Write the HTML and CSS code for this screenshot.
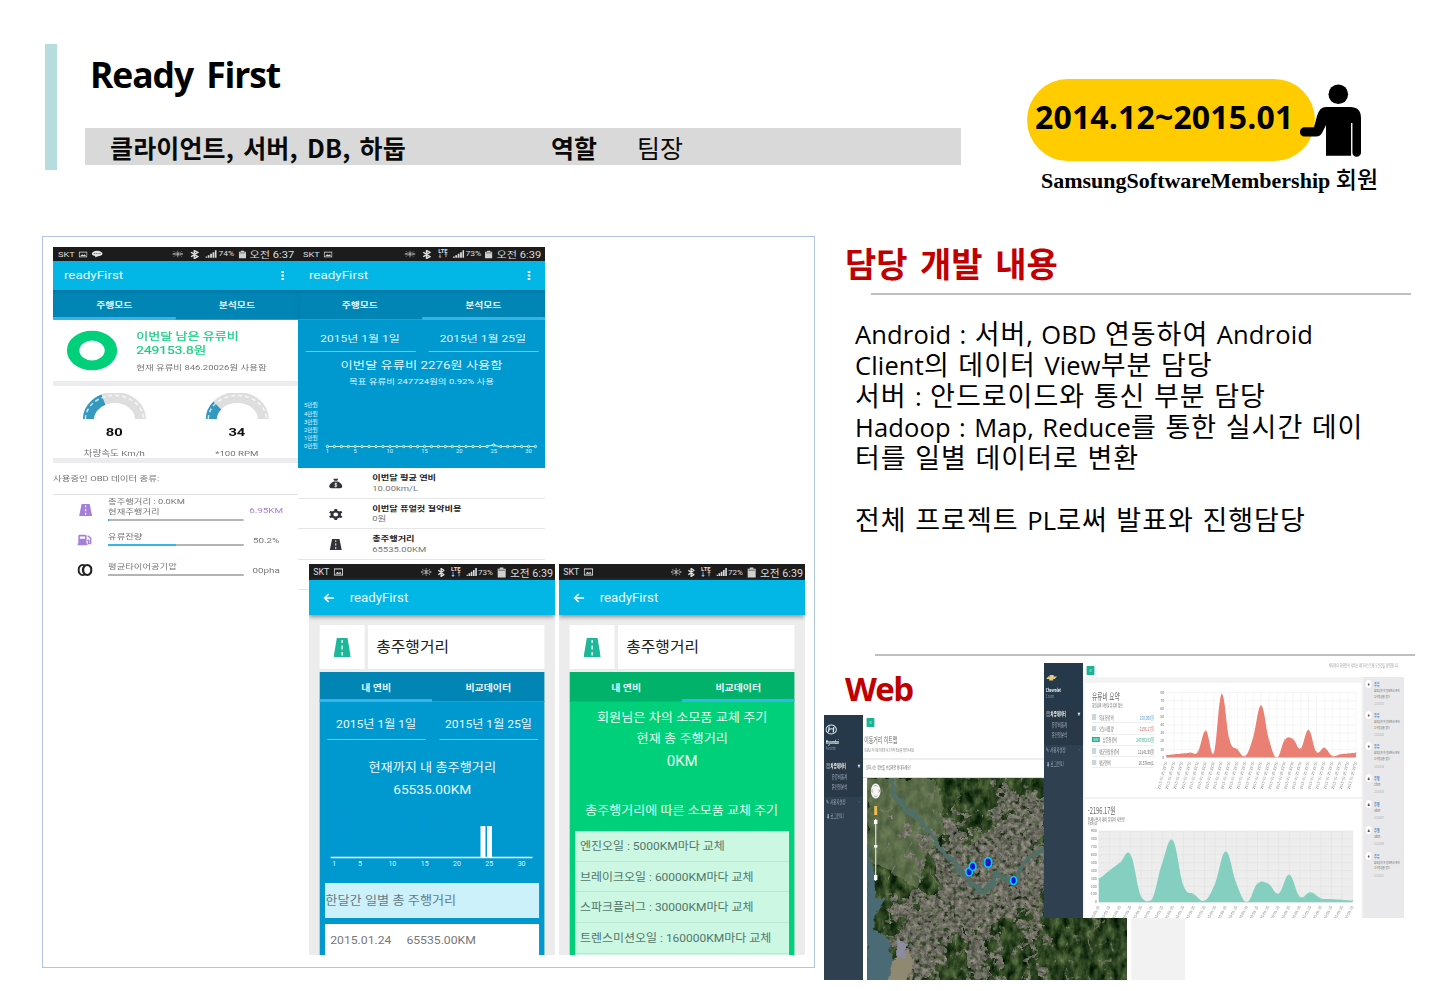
FILE: index.html
```html
<!DOCTYPE html>
<html lang="ko">
<head>
<meta charset="utf-8">
<title>Ready First</title>
<link rel="stylesheet" href="styles.css">
</head>
<body>
<svg class="defs" aria-hidden="true">
  <symbol id="i-pic" viewBox="0 0 10 8"><rect x=".6" y=".6" width="8.8" height="6.8" fill="none" stroke="#ddd" stroke-width="1.1"/><path d="M2 6l2-2.4 1.5 1.5L7 3.800 8.200 6z" fill="#ddd"/></symbol>
  <symbol id="i-chat" viewBox="0 0 12 9"><ellipse cx="6" cy="4" rx="5.600" ry="3.700" fill="#e4e4e4"/><path d="M4 7l0 2 2.500-2z" fill="#e4e4e4"/><path d="M2.500 4h7" stroke="#555" stroke-width="1.300" stroke-dasharray="1.300 .6"/></symbol>
  <symbol id="i-eye" viewBox="0 0 12 9"><path d="M.5 4.500Q6 .8 11.500 4.500Q6 8.200 .5 4.500M2 1l1 1.300M6 0v1.800M10 1L9 2.300M2 8l1-1.300M6 9V7.200M10 8L9 6.700" fill="none" stroke="#aaa" stroke-width=".9"/><circle cx="6" cy="4.500" r="1.500" fill="#aaa"/></symbol>
  <symbol id="i-bt" viewBox="0 0 8 10"><path d="M1 2.500l6 5L4 9.500v-9l3 2-6 5" fill="none" stroke="#ddd" stroke-width="1.500"/></symbol>
  <symbol id="i-sig" viewBox="0 0 11 9"><path d="M0 9V7.500h1.700V9zM2.300 9V6h1.700v3zM4.600 9V4.300h1.700V9zM6.900 9V2.300h1.700V9zM9.200 9V0h1.700v9z" fill="#ddd"/></symbol>
  <symbol id="i-bat" viewBox="0 0 8 10"><path d="M2.300 0h3.400v1.200H8V10H0V1.200h2.300z" fill="#d0d0d0"/><path d="M1 2h6v1.500H1z" fill="#888"/></symbol>
  <symbol id="i-dots" viewBox="0 0 3 9"><path d="M.5 0h2v2h-2zM.5 3.500h2v2h-2zM.5 7h2v2h-2z" fill="#fff"/></symbol>
  <symbol id="i-back" viewBox="0 0 11 10"><path d="M10.500 5H1.500M5.500 1L1.500 5l4 4" fill="none" stroke="#fff" stroke-width="1.400"/></symbol>
  <symbol id="i-road" viewBox="0 0 16 19"><path d="M3 0h10l3 19H0z" fill="currentColor"/><path d="M8 2v3M8 7.500v4M8 14v3.500" stroke="#fff" stroke-opacity=".85" stroke-width="1.400"/></symbol>
  <symbol id="i-pump" viewBox="0 0 15 13"><path d="M1 1.500Q1 0 2.500 0h5Q9 0 9 1.500V11h1v2H0v-2h1z" fill="currentColor"/><path d="M2.500 2h5v3h-5z" fill="#fff"/><path d="M10 1l3 3v6q-.3 2-2 1V7H9.500" fill="none" stroke="currentColor" stroke-width="1.500"/></symbol>
  <symbol id="i-tire" viewBox="0 0 13 13"><ellipse cx="4.600" cy="6.500" rx="3.600" ry="5.600" fill="none" stroke="#222" stroke-width="1.800"/><ellipse cx="8.400" cy="6.500" rx="3.600" ry="5.400" fill="#fff" stroke="#222" stroke-width="2"/></symbol>
  <symbol id="i-money" viewBox="0 0 14 12"><path d="M4.500 0h5L8.500 2.500h-3zM5 3.500h4Q14 7 13.500 10 13 12 11 12H3Q1 12 .5 10 0 7 5 3.500z" fill="#333238"/><path d="M8.400 6Q6 5.300 5.900 6.800 6 7.600 7.200 7.700 8.500 8 8.200 9.200 7.300 10.300 5.600 9.600M7 5v6" fill="none" stroke="#fff" stroke-width=".8"/></symbol>
  <symbol id="i-gear" viewBox="0 0 14 14"><circle cx="7" cy="7" r="3.800" fill="none" stroke="#333238" stroke-width="2.800"/><path d="M7 0v2.800M7 11.200V14M1 3.500l2.400 1.400M10.600 9.100L13 10.500M1 10.500l2.400-1.400M10.600 4.900L13 3.500" stroke="#333238" stroke-width="2.800"/></symbol>
</svg>

<main class="slide">
  <header class="head">
    <i class="accent"></i>
    <div class="intro">
      <h1>Ready First</h1>
      <div class="meta"><b class="stack">클라이언트, 서버, DB, 하둡</b><b class="role">역할</b><span>팀장</span></div>
    </div>
    <div class="period">
      <div class="when"><div class="pill">2014.12~2015.01</div>
        <svg class="person" viewBox="300 24 62 74"><circle cx="338.300" cy="34.200" r="9.800"/><path d="M326 47H350Q361 47 361 58V92.500a4.300 4.300 0 0 1-8.700 0V63h-1V95.700H326V65L322.500 72Q320.500 76.500 316 76.500H304.500a4.600 4.600 0 0 1 0-9.200H314L317 56Q319.500 47 326 47Z"/><path d="M351.700 63V95.700" stroke="#fff" stroke-width="1"/></svg>
      </div>
      <p class="member">SamsungSoftwareMembership <span>회원</span></p>
    </div>
  </header>

  <section class="gallery">
    <article class="phone wide p1"><div class="screen">
      <div class="status"><span>SKT</span><svg class="pic"><use href="#i-pic"/></svg><svg class="chat"><use href="#i-chat"/></svg><i class="sp"></i><svg class="eye"><use href="#i-eye"/></svg><svg class="bt"><use href="#i-bt"/></svg><svg class="sig"><use href="#i-sig"/></svg><small>74%</small><svg class="bat"><use href="#i-bat"/></svg><em>오전 6:37</em></div>
      <div class="appbar"><span>readyFirst</span><svg class="dots"><use href="#i-dots"/></svg></div>
      <div class="tabs"><b class="on">주행모드</b><b>분석모드</b></div>
      <div class="fuel">
        <svg class="ring" viewBox="0 0 40 40" preserveAspectRatio="none"><circle cx="20" cy="20" r="14.400" fill="none" stroke="#00d07a" stroke-width="9.500"/></svg>
        <div><p>이번달 남은 유류비</p><p class="sum">249153.8원</p><small>현재 유류비 846.20026원 사용함</small></div>
      </div>
      <div class="gauges">
        <div><svg viewBox="0 0 64 27" preserveAspectRatio="none"><path d="M6 26A26 21.500 0 0 1 58 26" fill="none" stroke="#dedede" stroke-width="11"/><path d="M6 26A26 21.500 0 0 1 21 6.700" fill="none" stroke="#3498bf" stroke-width="11"/><path d="M3 26A29 23.500 0 0 1 61 26" fill="none" stroke="#fff" stroke-opacity=".75" stroke-width="1.500" stroke-dasharray="4 3"/></svg><b>80</b><span>차량속도 Km/h</span></div>
        <div><svg viewBox="0 0 64 27" preserveAspectRatio="none"><path d="M6 26A26 21.500 0 0 1 58 26" fill="none" stroke="#dedede" stroke-width="11"/><path d="M6 26A26 21.500 0 0 1 12 12.500" fill="none" stroke="#3498bf" stroke-width="11"/><path d="M3 26A29 23.500 0 0 1 61 26" fill="none" stroke="#fff" stroke-opacity=".75" stroke-width="1.500" stroke-dasharray="4 3"/></svg><b>34</b><span>*100 RPM</span></div>
      </div>
      <p class="kinds">사용중인 OBD 데이터 종류:</p>
      <div class="obd two"><svg class="violet road"><use href="#i-road"/></svg><div><span>총주행거리 : 0.0KM</span><span>현재주행거리</span><i class="bar"><i style="width:1%"></i></i></div><em class="violet">6.95KM</em></div>
      <div class="obd"><svg class="violet pump"><use href="#i-pump"/></svg><div><span>유류잔량</span><i class="bar"><i style="width:50.2%"></i></i></div><em>50.2%</em></div>
      <div class="obd"><svg class="tire"><use href="#i-tire"/></svg><div><span>평균타이어공기압</span><i class="bar"></i></div><em>00pha</em></div>
    </div></article>

    <article class="phone wide p2"><div class="screen">
      <div class="status"><span>SKT</span><svg class="pic"><use href="#i-pic"/></svg><i class="sp"></i><svg class="eye"><use href="#i-eye"/></svg><svg class="bt"><use href="#i-bt"/></svg><span class="lte">LTE<br>↓↑</span><svg class="sig"><use href="#i-sig"/></svg><small>73%</small><svg class="bat"><use href="#i-bat"/></svg><em>오전 6:39</em></div>
      <div class="appbar"><span>readyFirst</span><svg class="dots"><use href="#i-dots"/></svg></div>
      <div class="tabs"><b>주행모드</b><b class="on">분석모드</b></div>
      <div class="analysis">
        <div class="dates"><span>2015년 1월 1일</span><span>2015년 1월 25일</span></div>
        <p class="big">이번달 유류비 2276원 사용함</p>
        <p class="goal">목표 유류비 247724원의 0.92% 사용</p>
        <svg id="cost" class="cost" viewBox="0 0 247 68" preserveAspectRatio="none"></svg>
      </div>
      <div class="item"><svg><use href="#i-money"/></svg><div><b>이번달 평균 연비</b><span>10.00km/L</span></div></div>
      <div class="item"><svg><use href="#i-gear"/></svg><div><b>이번달 퓨얼컷 절약비용</b><span>0원</span></div></div>
      <div class="item"><svg class="road"><use href="#i-road"/></svg><div><b>총주행거리</b><span>65535.00KM</span></div></div>
      <div class="item blank"></div>
    </div></article>

    <article class="phone tall p3"><div class="screen">
      <div class="status"><span>SKT</span><svg class="pic"><use href="#i-pic"/></svg><i class="sp"></i><svg class="eye"><use href="#i-eye"/></svg><svg class="bt"><use href="#i-bt"/></svg><span class="lte">LTE<br>↓↑</span><svg class="sig"><use href="#i-sig"/></svg><small>73%</small><svg class="bat"><use href="#i-bat"/></svg><em>오전 6:39</em></div>
      <div class="appbar"><svg class="back"><use href="#i-back"/></svg><span>readyFirst</span></div>
      <div class="sheet">
        <div class="name"><div><svg><use href="#i-road"/></svg></div><h3>총주행거리</h3></div>
        <div class="tabs"><b class="on">내 연비</b><b>비교데이터</b></div>
        <div class="mine">
          <div class="dates"><span>2015년 1월 1일</span><span>2015년 1월 25일</span></div>
          <p class="now">현재까지 내 총주행거리</p>
          <p class="km">65535.00KM</p>
          <svg id="dist" class="dist" viewBox="0 0 225 64" preserveAspectRatio="none"></svg>
          <p class="daily">한달간 일별 총 주행거리</p>
          <p class="day"><span>2015.01.24</span><span>65535.00KM</span></p>
        </div>
      </div>
    </div></article>

    <article class="phone tall p4"><div class="screen">
      <div class="status"><span>SKT</span><svg class="pic"><use href="#i-pic"/></svg><i class="sp"></i><svg class="eye"><use href="#i-eye"/></svg><svg class="bt"><use href="#i-bt"/></svg><span class="lte">LTE<br>↓↑</span><svg class="sig"><use href="#i-sig"/></svg><small>72%</small><svg class="bat"><use href="#i-bat"/></svg><em>오전 6:39</em></div>
      <div class="appbar"><svg class="back"><use href="#i-back"/></svg><span>readyFirst</span></div>
      <div class="sheet">
        <div class="name"><div><svg><use href="#i-road"/></svg></div><h3>총주행거리</h3></div>
        <div class="tabs green"><b>내 연비</b><b class="on">비교데이터</b></div>
        <div class="compare">
          <p>회원님은 차의 소모품 교체 주기</p><p>현재 총 주행거리</p><p class="zero">0KM</p>
          <p class="cycle">총주행거리에 따른 소모품 교체 주기</p>
          <ul><li>엔진오일 : 5000KM마다 교체</li><li>브레이크오일 : 60000KM마다 교체</li><li>스파크플러그 : 30000KM마다 교체</li><li>트렌스미션오일 : 160000KM마다 교체</li><li></li></ul>
        </div>
      </div>
    </div></article>
  </section>

  <section class="work">
    <h2>담당 개발 내용</h2>
    <hr>
    <div class="desc">
      <p><span class="en">Android : </span>서버<span class="en">, OBD </span>연동하여 <span class="en">Android</span></p>
      <p><span class="en">Client</span>의 데이터 <span class="en">View</span>부분 담당</p>
      <p>서버<span class="en"> : </span>안드로이드와 통신 부분 담당</p>
      <p><span class="en">Hadoop : Map, Reduce</span>를 통한 실시간 데이</p>
      <p>터를 일별 데이터로 변환</p>
      <p>&nbsp;</p>
      <p>전체 프로젝트 <span class="en">PL</span>로써 발표와 진행담당</p>
    </div>
    <hr class="second">
    <h2 class="web">Web</h2>
  </section>

  <article class="window w1"><div class="view">
    <nav class="side">
      <svg class="logo" viewBox="0 0 12 11" preserveAspectRatio="none"><ellipse cx="6" cy="5.500" rx="5.200" ry="4.500" fill="none" stroke="#dfe5ea" stroke-width="1"/><path d="M4 2.500L3.300 8M8.700 3L8 8.500M3.800 5.800Q6 4 8.300 5.300" fill="none" stroke="#dfe5ea" stroke-width="1.200"/></svg>
      <b>Hyundai</b><small>Avante</small>
      <div class="menu"><b>▤ 차종데이터 <i>▾</i></b><span>유류비통계</span><span>운전일분석</span></div>
      <p>✎ 사용자설정 <i>‹</i></p><p>⬇ 로그인(L)</p>
    </nav>
    <div class="page">
      <div class="top"><i class="burger">≡</i></div>
      <h4>이동거리 히트맵</h4>
      <p class="sub">회원님 차 이동거리와 사고지역 정보를 확인하세요</p>
      <p class="hint">원하시는 정보를 보실려면 확대하세요!</p>
      <div class="maprow">
      <svg class="map" viewBox="0 0 260 202" preserveAspectRatio="none">
        <defs>
          <filter id="forest" x="0" y="0" width="100%" height="100%" color-interpolation-filters="sRGB"><feTurbulence type="fractalNoise" baseFrequency=".13 .08" numOctaves="4" seed="4"/><feColorMatrix values=".55 0 0 0 -.1  .55 0 0 0 -.01  .4 0 0 0 -.07  0 0 0 0 1"/></filter>
          <filter id="town" x="-10%" y="-10%" width="120%" height="120%" color-interpolation-filters="sRGB"><feTurbulence type="fractalNoise" baseFrequency=".07" numOctaves="4" seed="8" result="n"/><feDisplacementMap in="SourceGraphic" in2="n" scale="60" xChannelSelector="R" yChannelSelector="G" result="s"/><feTurbulence type="fractalNoise" baseFrequency=".22" numOctaves="4" seed="3"/><feColorMatrix values=".5 0 0 0 .23  .48 0 0 0 .22  .45 0 0 0 .21  0 4 0 0 -.95"/><feComposite in2="s" operator="in"/></filter>
          <filter id="rough" x="-10%" y="-10%" width="120%" height="120%" color-interpolation-filters="sRGB"><feTurbulence type="fractalNoise" baseFrequency=".09" numOctaves="3" seed="2"/><feDisplacementMap in="SourceGraphic" scale="9" xChannelSelector="R" yChannelSelector="G"/></filter>
          <filter id="veins" x="0" y="0" width="100%" height="100%" color-interpolation-filters="sRGB"><feTurbulence type="turbulence" baseFrequency=".045 .03" numOctaves="4" seed="11"/><feColorMatrix values="0 0 0 0 .5  0 0 0 0 .52  0 0 0 0 .45  -12 0 0 0 1.500"/></filter>
        </defs>
        <rect width="260" height="202" filter="url(#forest)"/>
        <path d="M0 0H70L78 55 60 75 50 110 0 80Z" fill="#7b8865" opacity=".6" filter="url(#rough)"/>
        <rect width="260" height="202" filter="url(#veins)" opacity=".8"/>
        <g filter="url(#town)" opacity=".9">
          <path d="M30 45L75 65 90 20 105 65 130 45 130 0 145 0 155 30 175 10 185 80 180 140 150 130 120 150 130 205 105 205 95 150 60 190 25 150 25 120 70 115 60 85Z"/>
          <path d="M150 100L175 140 168 200 160 200 155 140ZM30 125L60 120 75 200 35 202ZM95 120L140 120 110 202 100 202Z"/>
        </g>
        <g filter="url(#rough)">
          <path d="M0 65Q8 90 8 120L20 120 10 133 8 150 22 165 25 180 45 190 30 204H0Z" fill="#4a6b76"/>
          <path d="M28 178L42 172 46 190 36 204 20 204Z" fill="#8f8972"/>
          <path d="M30 160l12 5-4 18-8-4z" fill="#8c8ba0"/>
          <path d="M25 0L28 18 33 24 53 42 70 67 86 84 100 100 115 114 125 107 130 97 146 104 153 90 163 77 180 70" fill="none" stroke="#506f67" stroke-width="5"/>
        </g>
        <g fill="#0018d8" stroke="#12c8f4" stroke-width="1.700"><ellipse cx="102" cy="94" rx="3.300" ry="4"/><ellipse cx="105.500" cy="88.500" rx="3.300" ry="4"/><ellipse cx="121" cy="84.500" rx="3.600" ry="4.800"/><ellipse cx="146.500" cy="102.500" rx="3" ry="4"/></g>
        <circle cx="121" cy="84.500" r="1.200" fill="#7a1050"/>
        <ellipse cx="8.500" cy="13" rx="4.800" ry="7.500" fill="#f4f4f4"/><path d="M7 8.500l1.500-1.500L10 8.500M7 17.500l1.500 1.500 1.500-1.500M5.500 11.500l-1 1.500 1 1.500M11.500 11.500l1 1.500-1 1.500" fill="none" stroke="#777" stroke-width=".7"/>
        <path d="M7 28h3v9H7z" fill="#ecbb50"/><path d="M8.500 41v62" stroke="#ddd" stroke-width="1.200"/><path d="M6.800 42h3.400v4H6.800zM6.800 97h3.400v5H6.800zM6.800 67h3.400v2.500H6.800z" fill="#fff"/>
      </svg><i class="gutter"></i></div>
    </div>
  </div></article>

  <article class="window w2"><div class="view">
    <nav class="side">
      <svg class="logo" viewBox="0 0 12 11" preserveAspectRatio="none"><path d="M1 7L3 4.500H4.500V3H8.500V4.500H11.800L9.500 7H8V8.500H4V7H.5Z" fill="#e4ca7e"/></svg>
      <b>Chevrolet</b><small>Cruze</small>
      <div class="menu"><b>▤ 차종데이터 <i>▾</i></b><span>유류비통계</span><span>운전일분석</span></div>
      <p>✎ 사용자설정 <i>‹</i></p><p>⬇ 로그인(L)</p>
    </nav>
    <div class="page">
      <div class="top"><i class="burger">≡</i><span>빅데이터 차량분석 서비스 레디퍼스트에 오신것을 환영합니다</span></div>
      <div class="cols">
        <div class="cards">
          <div class="card first">
            <div class="stats"><h4>유류비 요약</h4><p>회원님의 이번달 유류비 정보</p>
              <ul><li><i></i>목표유류비<em class="blue">250,000원</em></li><li><i></i>오늘사용량<em class="red">-2196.17원</em></li><li><i class="new">New</i>남은유류비<em class="teal">247803.83원</em></li><li><i></i>평균한달유류비<em>11141.98원</em></li><li><i></i>평균연비<em>16.57km/L</em></li></ul>
            </div>
            <svg id="red" class="red-chart" viewBox="0 0 205 114" preserveAspectRatio="none"></svg>
          </div>
          <div class="card"><h4>-2196.17원</h4><p class="tsub">전체사용자 대비 유류비 사용량</p><small>유류비(원)</small>
            <svg id="teal" class="teal-chart" viewBox="0 0 276 94" preserveAspectRatio="none"></svg></div>
        </div>
        <div class="feed">
          <div><i>♦</i><b>주유</b><span>회원님의 차 정보에서 연비</span><span>우수등급을 얻다</span><small>22:50:52</small></div>
          <div><i>♦</i><b>주유</b><span>회원님의 차 정보에서 연비</span><span>우수등급을 얻다</span><small>22:50:53</small></div>
          <div><i>♦</i><b>주유</b><span>회원님의 차 정보에서 연비</span><span>우수등급을 얻다</span><small>22:50:54</small></div>
          <div class="short"><i>▲</i><b>주행</b><span>27km</span><small>22:50:55</small></div>
          <div class="short"><i>▲</i><b>주행</b><span>38km</span><small>22:50:57</small></div>
          <div class="short"><i>▲</i><b>주행</b><span>30km</span><small>22:50:58</small></div>
          <div><i>♦</i><b>주유</b><span>회원님의 차 정보에서 연비</span><span>우수등급을 얻다</span><small>22:50:12</small></div>
        </div>
      </div>
    </div>
  </div></article>
</main>
<script src="charts.js"></script>
</body>
</html>
```

FILE: styles.css
```css
* { box-sizing: border-box; margin: 0; padding: 0; }
body { background: #fff; color: #000; font-family: "Noto Sans CJK KR", sans-serif; }
.defs { position: absolute; width: 0; height: 0; }
i, em { font-style: normal; }
.slide { position: relative; width: 1429px; height: 991px; overflow: hidden; display: grid; grid-template: 192px 1fr / 773px 1fr; padding: 44px 0 23px 42px; }

.head { grid-column: 1 / 3; display: flex; padding-left: 3px; }
.accent { width: 12px; height: 126px; background: #b7dcde; }
.intro { width: 876px; margin-left: 28px; }
h1 { height: 84px; padding: 4px 0 0 5px; font: 700 35.5px/52px "Open Sans", sans-serif; letter-spacing: -1.1px; word-spacing: 5px; }
.meta { display: flex; height: 37px; padding-left: 25px; background: #d9d9d9; font-size: 25px; line-height: 38px; color: #0a0a0a; white-space: nowrap; }
.meta .stack { width: 441px; font-size: 25px; letter-spacing: .15px; word-spacing: 2px; }
.meta .role { width: 86px; }
.period { margin-left: 66px; }
.when { display: flex; margin-top: 35px; }
.pill { width: 288px; height: 82px; border-radius: 41px; padding-left: 8px; background: #fc0; font: 700 32px/76px "Open Sans", sans-serif; letter-spacing: .15px; white-space: nowrap; }
.person { width: 62px; height: 74px; margin: 5px 0 0 -15px; }
.member { padding-left: 14px; font: 700 22px/36px "Liberation Serif", serif; white-space: nowrap; }
.member span { font: 500 23px/34px "Noto Sans CJK KR", sans-serif; }

.gallery { position: relative; border: 1px solid #afc5e0; }
.phone { position: absolute; overflow: hidden; background: #fff; font-family: Roboto, "Noto Sans CJK KR", sans-serif; color: #777; }
.screen { transform-origin: 0 0; white-space: nowrap; }
.p1 { left: 10px; top: 10px; width: 245px; height: 345px; }
.p2 { left: 255px; top: 10px; width: 247px; height: 345px; }
.p3 { left: 266px; top: 327px; width: 246px; height: 391px; }
.p4 { left: 516px; top: 327px; width: 246px; height: 391px; }
.wide .screen { width: 193px; transform: scaleX(1.28); }
.p1 .screen { width: 191.5px; }
.tall .screen { width: 230px; transform: scaleX(1.07); }

.status { display: flex; align-items: center; gap: 3px; height: 14px; padding: 0 3px 0 4px; background: #1c1c1c; color: #ddd; font-size: 7.200px; }
.status .sp { flex: 1; }
.status svg { flex: none; }
.pic { width: 7px; height: 7px; }
.chat { width: 9px; height: 8px; }
.eye { width: 9px; height: 8px; margin-right: 2px; }
.bt { width: 7px; height: 9px; margin-right: 2px; }
.sig { width: 9px; height: 8px; }
.bat { width: 6px; height: 9px; }
.status small { font-size: 6.600px; margin-left: -2px; }
.status em { font-size: 8.700px; }
.lte { font-size: 4.600px; line-height: 4.500px; text-align: center; font-weight: 700; }
.tall .status { height: 16px; font-size: 8.300px; padding-right: 2px; gap: 4px; }
.tall .status em { font-size: 10px; }
.tall .status small { font-size: 7.500px; margin-left: -3px; }
.tall .lte { font-size: 5.600px; line-height: 5.500px; }
.tall .pic { width: 9px; height: 8px; }
.tall .bat { width: 8px; height: 11px; }
.tall .sig { width: 10px; height: 10px; }
.tall .eye, .tall .bt { margin-right: 1px; }
.tall .eye { width: 11px; }

.appbar { display: flex; align-items: center; justify-content: space-between; height: 29px; padding: 0 11px 0 8.500px; background: #02b6e5; color: #e8faff; font-size: 10.500px; }
.dots { width: 3px; height: 9px; }
.tall .appbar { height: 35px; justify-content: flex-start; padding-left: 12.500px; font-size: 12.400px; position: relative; box-shadow: 0 2px 4px #9a8d8d; }
.back { width: 11px; height: 10px; margin-right: 14.500px; }
.tabs { display: grid; grid-template-columns: 1fr 1fr; height: 30px; background: #0085b4; color: #e9f8ff; font-size: 7.700px; line-height: 27px; text-align: center; box-shadow: inset 0 2px 2px #0077a4; padding-top: 2px; }
.tabs b { height: 28px; border-bottom: 1px solid #1f9fd2; }
.tabs .on { border-bottom: 3px solid #36b4e8; }
.tall .tabs { font-size: 9.300px; height: 30px; box-shadow: none; }
.tabs.green { background: #00b26a; }

.fuel { display: flex; height: 66px; padding: 10px 0 0 9.500px; border-bottom: 5px solid #ececee; }
.ring { width: 41px; height: 41px; margin-right: 14.500px; }
.fuel p { font-size: 10.200px; line-height: 14px; color: #1ccd85; -webkit-text-stroke: .2px; }
.fuel .sum { font-size: 10.700px; }
.fuel small { display: block; font-size: 7.400px; line-height: 20px; }
.gauges { display: grid; grid-template-columns: 1fr 1fr; height: 77px; border-bottom: 5px solid #ececee; padding-top: 7px; text-align: center; }
.gauges div { display: flex; flex-direction: column; align-items: center; }
.gauges svg { width: 50px; height: 27px; }
.gauges b { height: 25px; font-size: 11.500px; line-height: 25px; color: #111; }
.gauges span { font-size: 7.500px; line-height: 18px; }
.kinds { height: 32px; border-bottom: 1px solid #e2e2e2; font-size: 7.400px; line-height: 31px; }
.obd { display: grid; grid-template-columns: 43px 105.500px 1fr; height: 30px; align-items: center; font-size: 7.300px; }
.obd svg { width: 12px; height: 12px; justify-self: end; margin-right: 12px; }
.obd .road { width: 11px; }
.obd > div { display: flex; flex-direction: column; justify-content: flex-end; height: 30px; padding-bottom: 9px; }
.obd > div span { line-height: 10px; }
.obd .bar { height: 2px; margin-top: 2.500px; background: #b4b4b4; }
.obd.two > div { padding-bottom: 4px; }
.bar i { display: block; height: 2px; background: #33b5e5; }
.obd em { text-align: center; padding-right: 7px; font-size: 7.700px; }
.obd .violet, .violet { color: #a67fd8; }

.analysis { height: 148px; background: #0099cf; color: #dff5ff; text-align: center; padding-top: 7px; }
.dates { display: grid; grid-template-columns: 86px 86px; gap: 10px; padding-left: 5.500px; font-size: 9.400px; line-height: 24px; }
.dates span { height: 25px; border-bottom: 1px solid #6fc6e6; }
.big { font-size: 10.400px; line-height: 16px; padding-top: 6px; height: 22px; }
.goal { font-size: 7.400px; line-height: 15px; }
.cost { display: block; width: 193px; height: 68px; margin-top: 9px; }
.cost text, .dist text { fill: #dff5ff; font-size: 5.800px; }
.item { display: grid; grid-template-columns: 58px 1fr; height: 30.500px; padding-top: 2px; align-items: center; border-bottom: 1px solid #e6e6e6; font-size: 7.400px; }
.item svg { width: 11px; height: 13px; margin-left: 23.500px; color: #333238; }
.item .road { height: 11px; }
.item b, .item span { display: block; line-height: 10.500px; }
.item b { color: #222; font-size: 7.200px; }

.sheet { height: 340px; padding: 10px 10px 0 10.300px; background: #ececec; }
.name { display: grid; grid-template-columns: 42px 1fr; gap: 3px; height: 44px; margin-bottom: 3px; }
.name > * { height: 44px; background: #fff; overflow: hidden; }
.name svg { display: block; width: 16px; height: 19px; margin: 13px; color: #1db899; }
.name h3 { padding-left: 7.500px; font-weight: 400; font-size: 14.800px; line-height: 44px; color: #222; }
.mine { height: 256px; padding: 8px 5px 0; background: #0099cf; color: #e8f8ff; text-align: center; }
.tall .dates { grid-template-columns: 92px 92px; gap: 13px; padding-left: 1.500px; font-size: 11.300px; line-height: 30px; }
.tall .dates span { height: 30px; }
.now { margin-top: 17px; font-size: 12.300px; line-height: 22px; }
.km { font-size: 12.800px; line-height: 21px; }
.dist { display: block; width: 210px; height: 64px; margin: 6px -5px 13px; }
.daily { height: 35px; margin-bottom: 6px; background: #ccf1fa; color: #667c84; font-size: 12.300px; line-height: 36px; text-align: left; }
.day { display: flex; gap: 14px; padding-left: 4.500px; background: #fff; color: #777; font-size: 11.400px; line-height: 33px; }
.compare { height: 256px; padding: 6px 4.800px 0; background: #00d07a; color: #e5fff2; text-align: center; font-size: 12.300px; line-height: 21px; }
.compare .zero { font-size: 14px; line-height: 22px; }
.compare .cycle { line-height: 28px; margin: 25px -4px 6px -5px; font-size: 12.200px; }
.compare ul { list-style: none; background: #cbf7e3; color: #54766a; text-align: left; font-size: 11.200px; }
.compare li { height: 30.700px; padding-left: 4.500px; line-height: 32px; border-bottom: 1px solid #b9e9d3; }

.work { padding-left: 30px; }
h2 { height: 56px; font-size: 34px; line-height: 54px; word-spacing: 3px; color: #c00000; font-weight: 700; white-space: nowrap; }
hr { width: 540px; height: 2px; margin: 1px 0 0 26px; border: 0; background: #bfbfbf; }
.desc { height: 358px; padding: 22px 0 0 10px; font-size: 27px; line-height: 31px; letter-spacing: 1px; white-space: nowrap; }
.desc p { height: 31px; }
.en { font: 400 25.500px/31px "Open Sans", sans-serif; letter-spacing: .15px; word-spacing: 1.500px; white-space: pre; }
.second { margin-left: 30px; }
.web { padding-top: 6px; font-family: "Open Sans", sans-serif; font-size: 33px; letter-spacing: -1.600px; }

.window { position: absolute; overflow: hidden; background: #fff; color: #666; }
.w1 { left: 824px; top: 715px; width: 361px; height: 265px; }
.w2 { left: 1044px; top: 663px; width: 360px; height: 255px; }
.view { display: flex; width: 602px; height: 100%; transform: scaleX(.6); transform-origin: 0 0; white-space: nowrap; font-size: 5.500px; }
.w2 .view { width: 600px; }
.side { width: 65px; flex: none; background: linear-gradient(#25394a 0 82px, #2f4050 82px); color: #a7b1c2; }
.side > b, .side > small { display: block; margin-left: 3px; font-size: 5.200px; line-height: 6px; color: #fff; }
.side > small { color: #8095a8; }
.logo { display: block; width: 20px; height: 11px; margin: 9px 0 4px 2px; }
.menu { height: 37px; margin: 7px 0 1px; padding: 2px 0 0 4px; background: #293846; line-height: 9.500px; }
.menu b, .menu span { display: block; }
.menu b { color: #fff; line-height: 13px; }
.menu span { padding-left: 9px; }
.side i { float: right; margin-right: 6px; }
.side p { padding-left: 4px; line-height: 13.500px; }
.page { flex: 1; min-width: 0; }
.top { display: flex; justify-content: space-between; height: 14px; padding: 3px 9px 0 6px; color: #999; font-size: 4.600px; line-height: 1; }
.top span { margin-top: -3px; }
.burger { width: 13px; height: 9px; background: #1ab394; color: #fff; font-size: 5px; text-align: center; line-height: 8px; border-radius: 1px; }
h4 { font-weight: 400; font-size: 9px; line-height: 12px; }
.w1 h4 { padding: 4px 0 0 2px; font-size: 8.200px; line-height: 13px; }
.sub { padding-left: 2px; height: 12px; font-size: 4px; line-height: 8px; color: #777; }
.hint { height: 20px; padding-left: 5px; font-size: 4.700px; line-height: 14px; border-top: 2px solid #eee; border-bottom: 1px solid #ddd; }
.maprow { display: flex; padding-left: 7px; }
.map { display: block; width: 433px; height: 202px; flex: none; }
.gutter { flex: 1; margin-left: 7px; background: #f2f2f2; }
.cols { display: grid; grid-template-columns: 467px 1fr; height: 241px; background: #f3f3f4; }
.cards { padding: 6px 3px 0; }
.card { height: 119px; background: #fff; padding: 6px 0 0 5px; }
.card small { display: block; font-size: 3.600px; line-height: 4px; }
.card h4 { font-size: 9.500px; line-height: 10px; }
.tsub { font-size: 4.800px; line-height: 7px; }
.first { display: flex; height: 114px; margin-bottom: 2px; padding: 0 0 0 12px; }
.stats { width: 103px; flex: none; padding-top: 8px; }
.stats p { line-height: 9px; font-size: 4.300px; height: 11px; }
.stats ul { list-style: none; }
.stats li { display: flex; align-items: center; height: 11.300px; border-bottom: 1px solid #eee; font-size: 5.200px; gap: 5px; }
.stats li i { width: 7px; height: 5.500px; background: #cbd5da; }
.stats li .new { width: 13px; background: #1ab394; color: #fff; font-size: 4px; line-height: 5px; text-align: center; }
.stats em { margin-left: auto; }
.blue { color: #5a9fd0; } .red { color: #dd6666; } .teal { color: #2ba88d; }
.red-chart { width: 341px; height: 114px; }
.teal-chart { width: 460px; height: 93px; margin-left: -5px; display: block; }
.chart-label { font-size: 3.600px; fill: #777; }
.feed { background: #e9e9eb; padding: 3px 0 0 18px; font-size: 3.900px; line-height: 5.600px; }
.feed div { position: relative; height: 31.200px; }
.feed .short { height: 26.100px; }
.feed b, .feed span, .feed small { display: block; }
.feed b { color: #5a8fd0; font-size: 5px; line-height: 8px; }
.feed small { color: #aaa; font-style: italic; font-size: 4.200px; padding-top: 2px; }
.feed i { position: absolute; left: -14px; top: 0; width: 10px; height: 8px; border-radius: 50%; background: #fff; text-align: center; line-height: 8px; color: #444; }
```

FILE: charts.js
```js
function line(x1, y1, x2, y2, color, w) {
  return `<path d="M${x1} ${y1}L${x2} ${y2}" stroke="${color}" stroke-width="${w}"/>`;
}

// Filled smooth curve, clamped to the baseline.
function area(data, x0, step, base, unit, fill) {
  const pts = data.map((v, i) => [x0 + i * step, base - v * unit]);
  const at = i => pts[Math.max(0, Math.min(pts.length - 1, i))];
  let d = `M${x0} ${base}L${pts[0]}`;
  for (let i = 0; i < pts.length - 1; i++) {
    const a = at(i - 1), b = at(i), c = at(i + 1), e = at(i + 2);
    const y1 = Math.min(base, b[1] + (c[1] - a[1]) / 5);
    const y2 = Math.min(base, c[1] - (e[1] - b[1]) / 5);
    d += `C${b[0] + step * .4} ${y1} ${c[0] - step * .4} ${y2} ${c}`;
  }
  d += `L${at(pts.length)[0]} ${base}Z`;
  return `<path d="${d}" fill="${fill}"/>` +
    pts.map(p => `<circle cx="${p[0]}" cy="${p[1]}" r=".6" fill="${fill}" stroke="#fff" stroke-width=".2"/>`).join("");
}

function areaChart(id, o) {
  const n = o.data.length, w = o.step * (n - 1), top = o.base - o.max * o.unit;
  let s = o.bg ? `<rect x="${o.x}" y="${top}" width="${w}" height="${o.base - top}" fill="${o.bg}"/>` : "";
  for (let v = 0; v <= o.max; v += o.tick) {
    const y = o.base - v * o.unit;
    s += line(o.x, y, o.x + w, y, o.grid, .5) + `<text class="chart-label" x="${o.x - 2}" y="${y + 1.2}" text-anchor="end">${v}</text>`;
  }
  for (let i = 0; i < n; i++) {
    const x = o.x + i * o.step;
    s += line(x, top, x, o.base, o.grid, .5);
    s += `<text class="chart-label" text-anchor="end" transform="translate(${x + 1} ${o.base + 4.5}) rotate(${o.angle})">${o.label}</text>`;
  }
  document.getElementById(id).innerHTML = s + area(o.data, o.x, o.step, o.base, o.unit, o.fill);
}

areaChart("red", { data: [3,4,5,6,7,33,5,78,22,10,2,25,64,22,0,22,23,11,34,7,12,2,4,5,6], x: 12.5, step: 7.92, base: 74.5, unit: .812, max: 80, tick: 10, grid: "#ececec", angle: -75, label: "2015-01-25 22:50", fill: "#ea8074" });
areaChart("teal", { data: [300,400,500,600,70,30,500,780,210,100,20,240,640,240,0,235,235,110,345,70,125,50,40,30,20], x: 14, step: 10.58, base: 77, unit: .08, max: 900, tick: 100, grid: "#e0e0e0", bg: "#ededed", angle: -62, label: "15-01-25", fill: "#84cfbf" });

const dayLabels = [1, 5, 10, 15, 20, 25, 30];
let s = "";
for (let v = 0; v < 6; v++) s += `<text x="6" y="${50.5 - v * 8.2}">${v}만원</text>`;
s += `<path d="M29.5 48.5H188L194.500 47 201 48.500H238" fill="none" stroke="#e5fff5" stroke-width="1"/>`;
for (let i = 0; i < 31; i++) s += `<circle cx="${29.5 + i * 6.93}" cy="${i === 24 ? 47 : 48.5}" r="1.2" fill="#2fc3a0" stroke="#fff" stroke-width=".7"/>`;
dayLabels.forEach(d => s += `<text text-anchor="middle" x="${29.5 + (d - 1) * 6.93}" y="55.5">${d}</text>`);
document.getElementById("cost").innerHTML = s;

s = "";
for (let x = 12; x < 214; x += 6.5) s += line(x, 0, x, 47, "#0595d4", .4);
for (let y = 0; y < 47; y += 6) s += line(12, y, 213, y, "#0595d4", .4);
s += line(11, 51.5, 213, 51.5, "#fff", 1.5);
s += `<path d="M161 20h5v31h-5zM167.500 20h5v31h-5z" fill="#fff"/>`;
dayLabels.forEach(d => s += `<text style="font-size:7px" text-anchor="middle" x="${14.5 + (d - 1) * 6.47}" y="60">${d}</text>`);
document.getElementById("dist").innerHTML = s;
```
